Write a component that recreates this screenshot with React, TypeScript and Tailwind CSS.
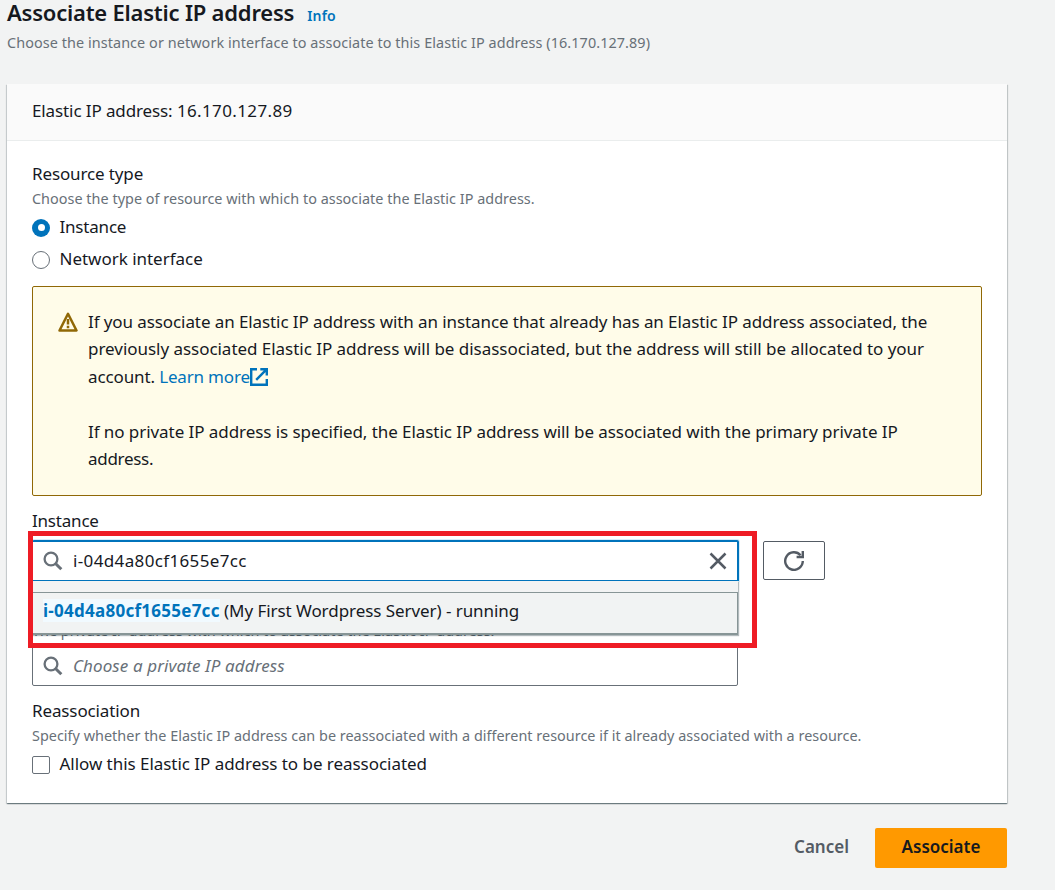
import React from "react";

function SearchIcon() {
  return (
    <svg width="20" height="20" viewBox="0 0 20 20" fill="none" stroke="#687078" strokeWidth="2.3">
      <circle cx="8" cy="8" r="6.4" />
      <path d="M12.5 12.5 L18.3 18.3" strokeWidth="3" />
    </svg>
  );
}

function WarningIcon() {
  return (
    <svg width="20" height="20" viewBox="0 0 20 20" fill="none" stroke="#906806" strokeWidth="2.5">
      <path d="M10 1.8 L18.5 18.5 H1.5 Z" strokeLinejoin="round" />
      <path d="M10 7 V12.4 M10 13.8 V16.2" />
    </svg>
  );
}

function ExternalIcon() {
  return (
    <svg width="18" height="18" viewBox="0 0 18 18" fill="none" stroke="#0073bb" strokeWidth="2.4">
      <path d="M7 1.2 H1.2 V16.8 H16.8 V11" />
      <path d="M10.3 1.2 H16.8 V7.5 M16.3 1.7 L6.2 11.8" />
    </svg>
  );
}

function RefreshIcon() {
  return (
    <svg width="20" height="20" viewBox="0 0 20 20" fill="none" stroke="#545b64" strokeWidth="2.4">
      <path d="M18.8 10 A8.8 8.8 0 1 1 16.6 4.2" />
      <path d="M18.8 0 V6 H12.6" />
    </svg>
  );
}

const body = "text-[17px] leading-[28px] whitespace-nowrap text-[#16191f]";
const hint = "text-[14.4px] leading-[20px] whitespace-nowrap text-[#687078]";

export default function App() {
  return (
    <div className="h-[890px] w-[1055px] bg-[#f2f3f3] pl-[7px] font-['Noto_Sans',sans-serif]">
      <header className="flex h-[28px] items-baseline gap-[13px] whitespace-nowrap">
        <h1 className="text-[22px] leading-[24px] font-semibold tracking-[-0.22px] text-[#16191f]">Associate Elastic IP address</h1>
        <a className="text-[14px] leading-[20px] font-semibold tracking-[0.2px] text-[#0073bb]">Info</a>
      </header>
      <p className={`${hint} mt-[5px] tracking-[0.08px]`}>
        Choose the instance or network interface to associate to this Elastic IP address (16.170.127.89)
      </p>

      <main className="mt-[31px] h-[719px] w-[1000px] bg-white shadow-[0_1px_1px_0_rgba(0,28,36,0.4),1px_1px_1px_0_rgba(0,28,36,0.15),-1px_1px_1px_0_rgba(0,28,36,0.12)]">
        <div className="flex h-[57px] items-center border-b border-[#eaeded] bg-[#fafafa] px-[25px] pb-[2px]">
          <h2 className={`${body} tracking-[-0.11px]`}>
            Elastic IP address: <span className="tracking-[0.38px]">16.170.127.89</span>
          </h2>
        </div>

        <div className="px-[25px] pt-[19px]">
          <div className={`${body} tracking-[-0.13px]`}>Resource type</div>
          <div className={`${hint} mt-px tracking-[0.03px]`}>
            Choose the type of resource with which to associate the Elastic IP address.
          </div>
          <label className="mt-[4px] flex h-[28px] items-center gap-[9.5px]">
            <span className="mt-px flex h-[18px] w-[18px] items-center justify-center rounded-full bg-[#0073bb]">
              <span className="h-[7px] w-[7px] rounded-full bg-white" />
            </span>
            <span className={`${body} tracking-[-0.2px]`}>Instance</span>
          </label>
          <label className="mt-[4px] flex h-[28px] items-center gap-[9.5px]">
            <span className="mt-px h-[18px] w-[18px] rounded-full border border-[#687078]" />
            <span className={`${body} tracking-[-0.02px]`}>Network interface</span>
          </label>

          <div className="mt-[13px] flex h-[210px] w-[950px] rounded-[2px] border border-[#906806] bg-[#fffce9] pt-[21px] pl-[25px]">
            <div className="mt-[4px] w-[30px]">
              <WarningIcon />
            </div>
            <div className="text-[17px] leading-[27px] whitespace-nowrap text-[#16191f]">
              <p className="tracking-[-0.09px]">If you associate an Elastic IP address with an instance that already has an Elastic IP address associated, the</p>
              <p className="tracking-[-0.035px]">previously associated Elastic IP address will be disassociated, but the address will still be allocated to your</p>
              <p className="mt-px flex items-center tracking-[-0.12px]">
                <span className="whitespace-pre">account. </span>
                <a className="flex items-center tracking-[-0.18px] text-[#0073bb]">
                  Learn more
                  <ExternalIcon />
                </a>
              </p>
              <p className="mt-[28px] tracking-[-0.065px]">If no private IP address is specified, the Elastic IP address will be associated with the primary private IP</p>
              <p className="tracking-[-0.3px]">address.</p>
            </div>
          </div>

          <div className={`${body} mt-[11px] tracking-[-0.2px]`}>Instance</div>
          <div className="relative mt-[5px] flex items-start gap-[24px]">
            <div className="flex h-[41px] w-[707px] items-center rounded-t-[2px] border border-t-2 border-r-2 border-[#0073bb] bg-white pr-[10px] pl-[9.5px] shadow-[0_0_0_1px_#d5ecf9]">
              <SearchIcon />
              <span className={`${body} ml-[10.5px] flex-1 tracking-[0.36px]`}>i-04d4a80cf1655e7cc</span>
              <svg width="18" height="18" viewBox="0 0 18 18" stroke="#545b64" strokeWidth="2.5">
                <path d="M1.5 1.5 L16.5 16.5 M16.5 1.5 L1.5 16.5" />
              </svg>
            </div>
            <button className="mt-px flex h-[39px] w-[62px] items-center justify-center rounded-[2px] border border-[#545b64] bg-white">
              <RefreshIcon />
            </button>
            <div className="absolute top-[41px] left-0 z-10 h-[54px] w-[706px] bg-[#f2f3f3] pt-[11px] shadow-[1px_1px_1px_0_rgba(0,28,36,0.3)]">
              <div className="flex h-[43px] items-center border border-b-2 border-[#879596] bg-[#f1f3f3] px-[10px] pb-[4px]">
                <span className={`${body} tracking-[-0.06px]`}>
                  <b className="bg-[#f1faff] font-bold tracking-[0.26px] text-[#0073bb]">i-04d4a80cf1655e7cc</b> (My First Wordpress Server) - running
                </span>
              </div>
            </div>
            <div className="absolute top-[-9px] left-[-4px] z-20 h-[117px] w-[729px] border-[5px] border-[#ee1c25]" />
          </div>

          <div className={`${hint} mt-[40px] tracking-[0.02px]`}>The private IP address with which to associate the Elastic IP address.</div>
          <div className="mt-[5px] flex h-[40px] w-[706px] items-center rounded-[2px] border border-[#687078] bg-white pl-[9.5px]">
            <SearchIcon />
            <span className="ml-[10.5px] text-[17px] leading-[28px] tracking-[0.1px] whitespace-nowrap text-[#687078] italic">Choose a private IP address</span>
          </div>

          <div className={`${body} mt-[11px] tracking-[-0.12px]`}>Reassociation</div>
          <div className={`${hint} mt-px tracking-[0.025px]`}>
            Specify whether the Elastic IP address can be reassociated with a different resource if it already associated with a resource.
          </div>
          <label className="mt-[4px] flex h-[28px] items-center gap-[9.5px]">
            <span className="mt-px h-[18px] w-[18px] rounded-[2px] border border-[#687078]" />
            <span className={`${body} tracking-[-0.04px]`}>Allow this Elastic IP address to be reassociated</span>
          </label>
        </div>
      </main>

      <footer className="mt-[25px] flex h-[40px] w-[1000px] items-center justify-end gap-[26px]">
        <button className="pb-[2px] text-[17px] font-semibold text-[#545b64]">Cancel</button>
        <button className="h-[40px] w-[132px] rounded-[2px] bg-[#ff9900] pb-[2px] text-[17px] font-semibold text-[#16191f]">Associate</button>
      </footer>
    </div>
  );
}
